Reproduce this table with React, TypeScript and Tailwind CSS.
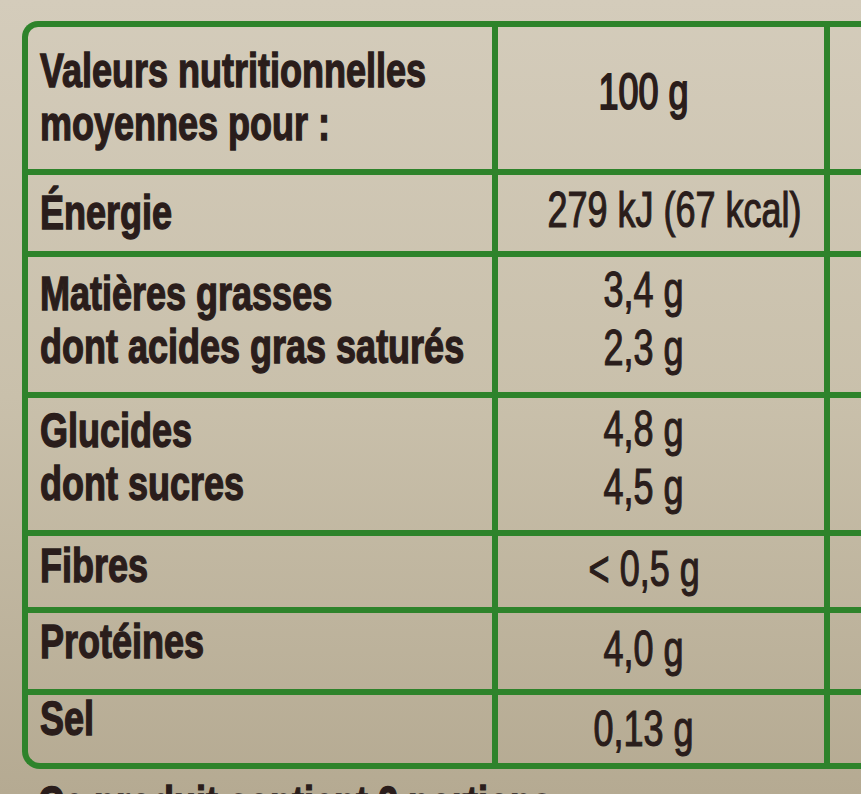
const rows = [
  {
    h: "h-[148px]",
    labelPad: "pt-[17px]",
    labels: ["Valeurs nutritionnelles", "moyennes pour :"],
    valuePad: "pt-[39px]",
    values: ["100 g"],
  },
  {
    h: "h-[82px]",
    labelPad: "pt-[11px]",
    labels: ["Énergie"],
    valuePad: "pt-[9px]",
    values: ["279 kJ (67 kcal)"],
  },
  {
    h: "h-[141px]",
    labelPad: "pt-[10px]",
    labels: ["Matières grasses", "dont acides gras saturés"],
    valuePad: "pt-[7px]",
    values: ["3,4 g", "2,3 g"],
  },
  {
    h: "h-[138px]",
    labelPad: "pt-[6px]",
    labels: ["Glucides", "dont sucres"],
    valuePad: "pt-[5px]",
    values: ["4,8 g", "4,5 g"],
  },
  {
    h: "h-[77px]",
    labelPad: "pt-[3px]",
    labels: ["Fibres"],
    valuePad: "pt-[7px]",
    values: ["< 0,5 g"],
  },
  {
    h: "h-[82px]",
    labelPad: "pt-[2px]",
    labels: ["Protéines"],
    valuePad: "pt-[10px]",
    values: ["4,0 g"],
  },
  {
    h: "h-[68px]",
    labelPad: "-mt-[3px]",
    labels: ["Sel"],
    valuePad: "pt-[8px]",
    values: ["0,13 g"],
  },
];

export default function App() {
  return (
    <div
      className="relative h-[794px] w-[861px] overflow-hidden bg-linear-to-b from-[#d4ccbb] via-[#c9c0ab] to-[#b5aa92] text-[#2a1d1b]"
      style={{ fontFamily: '"Liberation Sans", Arial, sans-serif' }}
    >
      <div className="pl-[22px] pt-[21px]">
        {/* tableau */}
        <div className="w-[900px] overflow-hidden rounded-tl-[16px] rounded-bl-[18px] border-t-[6px] border-b-[6px] border-l-[6px] border-[#2e832b]">
          {rows.map((row, i) => (
            <div
              key={i}
              className={`grid grid-cols-[470px_332px_1fr] ${row.h} ${
                i < rows.length - 1 ? "border-b-[6px] border-[#2e832b]" : ""
              }`}
            >
              <div className={`border-r-[6px] border-[#2e832b] pl-[12px] ${row.labelPad}`}>
                {row.labels.map((l, j) => (
                  <div key={j} className="h-[53px] whitespace-nowrap text-[48px] leading-[53px] font-bold">
                    <span className="inline-block origin-left scale-x-[0.75] [-webkit-text-stroke:1.4px_#2a1d1b]">
                      {l}
                    </span>
                  </div>
                ))}
              </div>
              <div className={`border-r-[6px] border-[#2e832b] pr-[34px] text-center ${row.valuePad}`}>
                {row.values.map((v, j) => (
                  <div key={j} className="h-[58px] whitespace-nowrap text-[50px] leading-[53px] font-normal">
                    <span
                      className={`inline-block scale-x-[0.72] ${
                        i === 0 ? "[-webkit-text-stroke:2px_#2a1d1b]" : "[-webkit-text-stroke:1.2px_#2a1d1b]"
                      }`}
                    >
                      {v}
                    </span>
                  </div>
                ))}
              </div>
              <div />
            </div>
          ))}
        </div>

        <p className="mt-[8px] whitespace-nowrap pl-[16px] text-[48px] leading-[53px] font-bold">
          <span className="inline-block origin-left scale-x-[0.75] [-webkit-text-stroke:1.4px_#2a1d1b]">
            Ce produit contient 2 portions
          </span>
        </p>
      </div>
    </div>
  );
}
